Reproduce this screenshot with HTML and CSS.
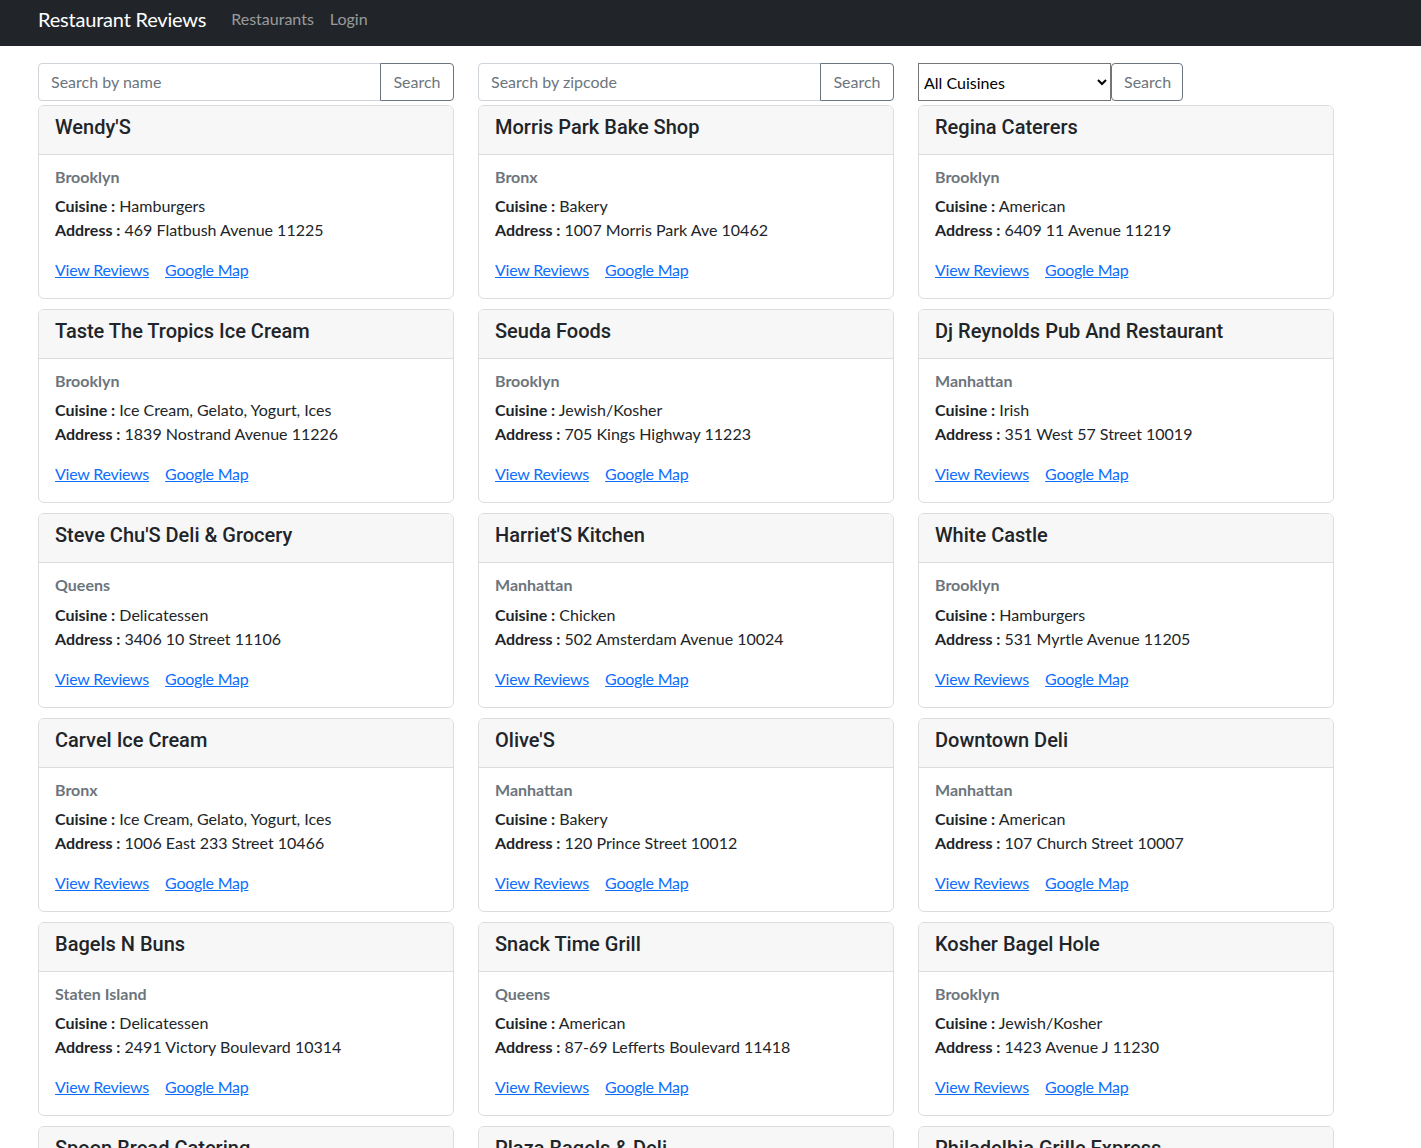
FILE: index.html
```html
<!DOCTYPE html>
<html lang="en">
<head>
<meta charset="utf-8">
<title>Restaurant Reviews</title>
<link rel="stylesheet" href="styles.css">
</head>
<body>
<nav class="navbar">
  <a class="brand" href="#">Restaurant Reviews</a>
  <a class="nav-link" href="#">Restaurants</a>
  <a class="nav-link" href="#">Login</a>
</nav>
<main class="main">
  <div class="grid">
    <form class="input-group">
      <input class="form-control" type="text" placeholder="Search by name">
      <button class="btn" type="button">Search</button>
    </form>
    <form class="input-group">
      <input class="form-control" type="text" placeholder="Search by zipcode">
      <button class="btn" type="button">Search</button>
    </form>
    <form class="input-group">
      <select class="cuisine-select"><option>All Cuisines</option></select>
      <button class="btn btn-round" type="button">Search</button>
    </form>

    <div class="card"><div class="card-header"><h5>Wendy'S</h5></div><div class="card-body"><h6>Brooklyn</h6><p><b>Cuisine :</b> Hamburgers<br><b>Address :</b> 469 Flatbush Avenue 11225</p><div class="links"><a href="#">View Reviews</a><a href="#">Google Map</a></div></div></div>
    <div class="card"><div class="card-header"><h5>Morris Park Bake Shop</h5></div><div class="card-body"><h6>Bronx</h6><p><b>Cuisine :</b> Bakery<br><b>Address :</b> 1007 Morris Park Ave 10462</p><div class="links"><a href="#">View Reviews</a><a href="#">Google Map</a></div></div></div>
    <div class="card"><div class="card-header"><h5>Regina Caterers</h5></div><div class="card-body"><h6>Brooklyn</h6><p><b>Cuisine :</b> American<br><b>Address :</b> 6409 11 Avenue 11219</p><div class="links"><a href="#">View Reviews</a><a href="#">Google Map</a></div></div></div>

    <div class="card"><div class="card-header"><h5>Taste The Tropics Ice Cream</h5></div><div class="card-body"><h6>Brooklyn</h6><p><b>Cuisine :</b> Ice Cream, Gelato, Yogurt, Ices<br><b>Address :</b> 1839 Nostrand Avenue 11226</p><div class="links"><a href="#">View Reviews</a><a href="#">Google Map</a></div></div></div>
    <div class="card"><div class="card-header"><h5>Seuda Foods</h5></div><div class="card-body"><h6>Brooklyn</h6><p><b>Cuisine :</b> Jewish/Kosher<br><b>Address :</b> 705 Kings Highway 11223</p><div class="links"><a href="#">View Reviews</a><a href="#">Google Map</a></div></div></div>
    <div class="card"><div class="card-header"><h5>Dj Reynolds Pub And Restaurant</h5></div><div class="card-body"><h6>Manhattan</h6><p><b>Cuisine :</b> Irish<br><b>Address :</b> 351 West 57 Street 10019</p><div class="links"><a href="#">View Reviews</a><a href="#">Google Map</a></div></div></div>

    <div class="card"><div class="card-header"><h5>Steve Chu'S Deli &amp; Grocery</h5></div><div class="card-body"><h6>Queens</h6><p><b>Cuisine :</b> Delicatessen<br><b>Address :</b> 3406 10 Street 11106</p><div class="links"><a href="#">View Reviews</a><a href="#">Google Map</a></div></div></div>
    <div class="card"><div class="card-header"><h5>Harriet'S Kitchen</h5></div><div class="card-body"><h6>Manhattan</h6><p><b>Cuisine :</b> Chicken<br><b>Address :</b> 502 Amsterdam Avenue 10024</p><div class="links"><a href="#">View Reviews</a><a href="#">Google Map</a></div></div></div>
    <div class="card"><div class="card-header"><h5>White Castle</h5></div><div class="card-body"><h6>Brooklyn</h6><p><b>Cuisine :</b> Hamburgers<br><b>Address :</b> 531 Myrtle Avenue 11205</p><div class="links"><a href="#">View Reviews</a><a href="#">Google Map</a></div></div></div>

    <div class="card"><div class="card-header"><h5>Carvel Ice Cream</h5></div><div class="card-body"><h6>Bronx</h6><p><b>Cuisine :</b> Ice Cream, Gelato, Yogurt, Ices<br><b>Address :</b> 1006 East 233 Street 10466</p><div class="links"><a href="#">View Reviews</a><a href="#">Google Map</a></div></div></div>
    <div class="card"><div class="card-header"><h5>Olive'S</h5></div><div class="card-body"><h6>Manhattan</h6><p><b>Cuisine :</b> Bakery<br><b>Address :</b> 120 Prince Street 10012</p><div class="links"><a href="#">View Reviews</a><a href="#">Google Map</a></div></div></div>
    <div class="card"><div class="card-header"><h5>Downtown Deli</h5></div><div class="card-body"><h6>Manhattan</h6><p><b>Cuisine :</b> American<br><b>Address :</b> 107 Church Street 10007</p><div class="links"><a href="#">View Reviews</a><a href="#">Google Map</a></div></div></div>

    <div class="card"><div class="card-header"><h5>Bagels N Buns</h5></div><div class="card-body"><h6>Staten Island</h6><p><b>Cuisine :</b> Delicatessen<br><b>Address :</b> 2491 Victory Boulevard 10314</p><div class="links"><a href="#">View Reviews</a><a href="#">Google Map</a></div></div></div>
    <div class="card"><div class="card-header"><h5>Snack Time Grill</h5></div><div class="card-body"><h6>Queens</h6><p><b>Cuisine :</b> American<br><b>Address :</b> 87-69 Lefferts Boulevard 11418</p><div class="links"><a href="#">View Reviews</a><a href="#">Google Map</a></div></div></div>
    <div class="card"><div class="card-header"><h5>Kosher Bagel Hole</h5></div><div class="card-body"><h6>Brooklyn</h6><p><b>Cuisine :</b> Jewish/Kosher<br><b>Address :</b> 1423 Avenue J 11230</p><div class="links"><a href="#">View Reviews</a><a href="#">Google Map</a></div></div></div>

    <div class="card"><div class="card-header"><h5>Spoon Bread Catering</h5></div><div class="card-body"><h6>Manhattan</h6><p><b>Cuisine :</b> Soul Food<br><b>Address :</b> 364 West 110 Street 10025</p><div class="links"><a href="#">View Reviews</a><a href="#">Google Map</a></div></div></div>
    <div class="card"><div class="card-header"><h5>Plaza Bagels &amp; Deli</h5></div><div class="card-body"><h6>Brooklyn</h6><p><b>Cuisine :</b> Bagels/Pretzels<br><b>Address :</b> 73 Fifth Avenue 11217</p><div class="links"><a href="#">View Reviews</a><a href="#">Google Map</a></div></div></div>
    <div class="card"><div class="card-header"><h5>Philadelhia Grille Express</h5></div><div class="card-body"><h6>Brooklyn</h6><p><b>Cuisine :</b> American<br><b>Address :</b> 1780 Eastern Parkway 11233</p><div class="links"><a href="#">View Reviews</a><a href="#">Google Map</a></div></div></div>
  </div>
</main>
</body>
</html>
```
FILE: styles.css
```css
* { box-sizing: border-box; }
html, body { margin: 0; padding: 0; }
body {
  font-family: "Lato", "Open Sans", sans-serif;
  font-size: 16px;
  line-height: 1.5;
  color: #212529;
  background: #fff;
}
.navbar {
  height: 46px;
  background: #212529;
  display: flex;
  align-items: center;
  padding: 0 38px;
}
.brand {
  color: #fff;
  font-size: 20px;
  letter-spacing: -0.2px;
  text-decoration: none;
  margin-right: 17px;
  margin-top: -8px;
}
.nav-link {
  color: rgba(255, 255, 255, 0.55);
  text-decoration: none;
  padding: 0 8px;
  margin-top: -8px;
}
.main {
  padding: 17px 38px 0;
}
.grid {
  display: grid;
  grid-template-columns: repeat(3, 416px);
  column-gap: 24px;
}
.input-group {
  display: flex;
  height: 38px;
  margin: 0 0 4px;
}
.form-control {
  flex: 1;
  min-width: 0;
  height: 38px;
  font: inherit;
  color: #212529;
  padding: 5px 12px 7px;
  border: 1px solid #ced4da;
  border-radius: 4px 0 0 4px;
  outline: none;
}
.form-control::placeholder { color: #6c757d; }
.btn {
  width: 74px;
  height: 38px;
  font: inherit;
  color: #6c757d;
  background: #fff;
  border: 1px solid #6c757d;
  border-radius: 0 4px 4px 0;
  margin-left: -1px;
  padding: 6px 12px;
}
.btn-round { width: 72px; border-radius: 4px; margin-left: 0; }
.cuisine-select {
  width: 193px;
  height: 38px;
  font: inherit;
  color: #000;
  background: #fff;
  border: 1px solid #767676;
  border-radius: 0;
  padding: 0 0 0 1px;
}
.card {
  border: 1px solid #dcdcdc;
  border-radius: 6px;
  margin-bottom: 10px;
  overflow: hidden;
}
.card-header {
  background: #f7f7f7;
  border-bottom: 1px solid #dcdcdc;
  padding: 8px 16px;
}
.card-header h5 {
  margin: 0 0 8px;
  padding-top: 1px;
  height: 24px;
  font-size: 20px;
  line-height: 1.2;
  color: #212529;
  font-family: "Roboto", "Lato", sans-serif;
  font-weight: 500;
}
.card-body { padding: 16px; }
.card-body h6 {
  margin: -4px 0 8px;
  font-size: 16px;
  line-height: 1.2;
  font-weight: 700;
  color: #6c757d;
}
.card-body p { margin: 0 0 16px; }
.card-body b { font-weight: 700; }
.links a {
  color: #0d6efd;
  text-decoration: underline;
  letter-spacing: -0.25px;
}
.links a + a { margin-left: 16px; }
```
